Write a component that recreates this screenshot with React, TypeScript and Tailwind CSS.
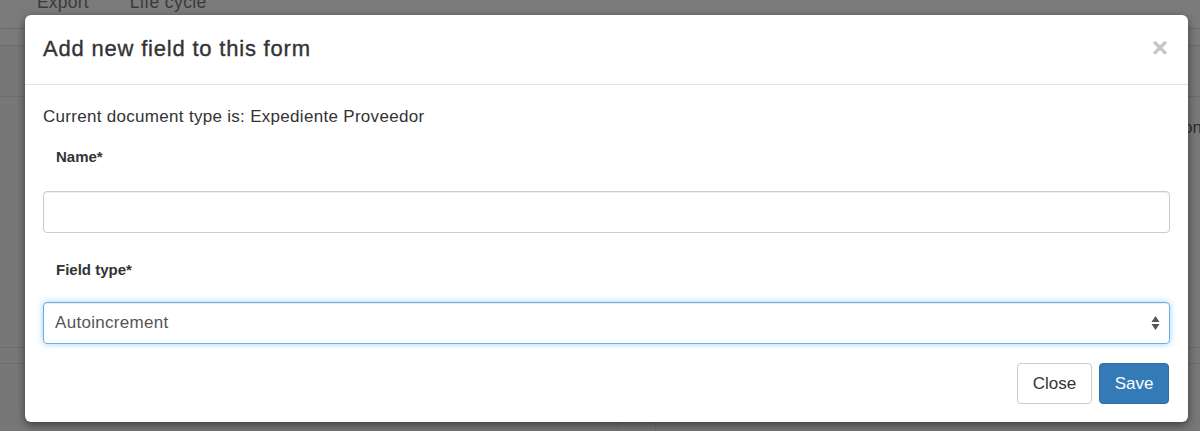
import React from "react";

export default function App() {
  const font = { fontFamily: '"Liberation Sans", Arial, Helvetica, sans-serif' };
  return (
    <div className="relative w-[1200px] h-[431px] overflow-hidden bg-[#777777]" style={font}>
      {/* dimmed page beneath */}
      <div className="flex flex-col w-full">
        <div className="h-[29px] border-b border-[#6c6c6c] bg-[#7b7b7b] flex items-start">
          <span className="ml-[37px] -mt-[8px] text-[17.5px] leading-[20px] tracking-[0.2px] text-[#3a3a3a]">Export</span>
          <span className="ml-[41px] -mt-[8px] text-[17.5px] leading-[20px] tracking-[0.4px] text-[#3a3a3a]">Life cycle</span>
        </div>
        <div className="h-[17px] border-b border-[#6c6c6c] bg-[#7a7a7a]" />
        <div className="h-[51px] border-b border-[#6c6c6c]" />
        <div className="h-[28px] flex justify-end">
          <span className="mt-[21px] mr-[-2px] text-[17px] leading-[20px] text-[#2e2e2e]">on</span>
        </div>
        <div className="h-[223px] border-b border-[#6c6c6c]" />
        <div className="h-[16px] border-b border-[#6c6c6c]" />
        <div className="h-[66px] flex">
          <div className="w-[618px] border-r border-[#6c6c6c]" />
          <div className="w-[38px] border-r border-[#6c6c6c]" />
        </div>
      </div>

      {/* modal */}
      <div className="absolute left-[25px] top-[15px] w-[1163px] h-[407px] bg-white rounded-[6px] shadow-[0_3px_9px_rgba(0,0,0,0.5)] flex flex-col">
        <div className="h-[70px] border-b border-[#e5e5e5] flex items-center justify-between pl-[18px] pr-[20px]">
          <h4 className="text-[22px] font-medium text-[#333] leading-[24px] -mt-[2px] tracking-[0.8px] [-webkit-text-stroke:0.35px_#333]">Add new field to this form</h4>
          <span className="text-[28px] font-bold text-[#c4c4c4] leading-none -mt-[4px]">×</span>
        </div>
        <div className="flex flex-col px-[18px]">
          <p className="mt-[21px] h-[22px] text-[17px] leading-[22px] tracking-[0.3px] text-[#333]">Current document type is: Expediente Proveedor</p>
          <label className="mt-[19px] pl-[13px] h-[20px] text-[15px] leading-[20px] font-bold text-[#333]">Name*</label>
          <input className="mt-[24px] h-[42px] w-full rounded-[4px] border border-[#cccccc] shadow-[inset_0_1px_1px_rgba(0,0,0,0.075)] outline-none px-[12px] text-[16px]" />
          <label className="mt-[27px] pl-[13px] h-[20px] text-[15px] leading-[20px] font-bold text-[#333]">Field type*</label>
          <div className="mt-[22px] h-[42px] w-full rounded-[4px] border border-[#66afe9] shadow-[inset_0_1px_1px_rgba(0,0,0,0.075),0_0_6px_rgba(102,175,233,0.6)] flex items-center justify-between pl-[11px] pr-[9px]">
            <span className="text-[17px] text-[#555] leading-[20px] tracking-[0.3px]">Autoincrement</span>
            <svg width="9" height="16" viewBox="0 0 9 16">
              <polygon points="4.5,1 8.5,7 0.5,7" fill="#555" />
              <polygon points="0.5,9 8.5,9 4.5,15" fill="#555" />
            </svg>
          </div>
          <div className="mt-[19px] flex justify-end gap-[7px] pr-[1px]">
            <button className="h-[41px] w-[75px] rounded-[4px] border border-[#cccccc] bg-white text-[17px] text-[#333]">Close</button>
            <button className="h-[41px] w-[70px] rounded-[4px] border border-[#2e6da4] bg-[#337ab7] text-[17px] text-white">Save</button>
          </div>
        </div>
      </div>
    </div>
  );
}
